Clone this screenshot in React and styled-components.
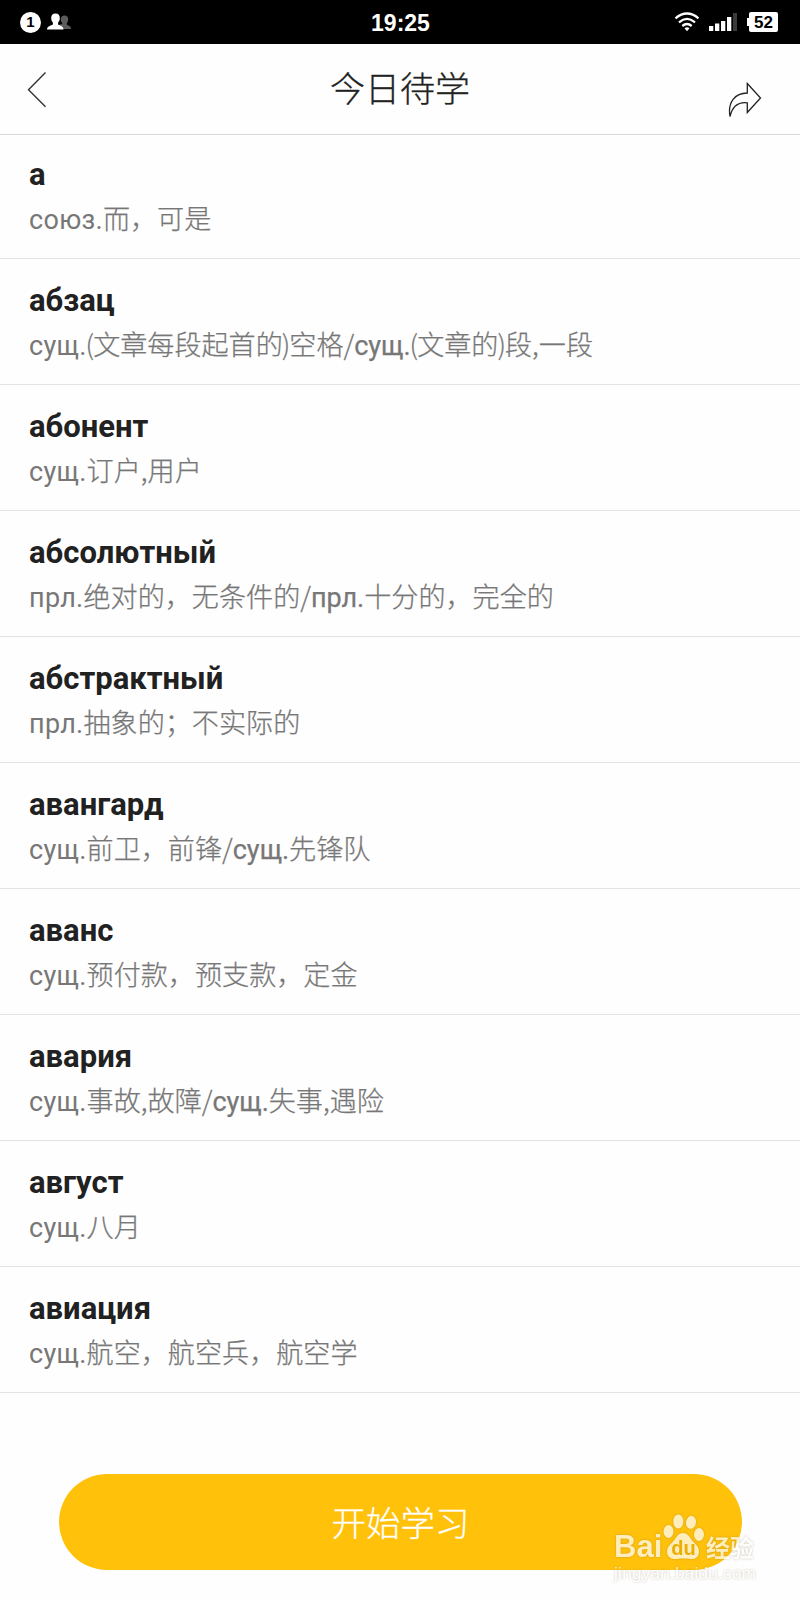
import styled, { createGlobalStyle } from "styled-components";

const words = [
    { word: "а", meanings: [["союз.", "而，可是"]] },
    { word: "абзац", meanings: [["сущ.", "(文章每段起首的)空格/"], ["сущ.", "(文章的)段,一段"]] },
    { word: "абонент", meanings: [["сущ.", "订户,用户"]] },
    { word: "абсолютный", meanings: [["прл.", "绝对的，无条件的/"], ["прл.", "十分的，完全的"]] },
    { word: "абстрактный", meanings: [["прл.", "抽象的；不实际的"]] },
    { word: "авангард", meanings: [["сущ.", "前卫，前锋/"], ["сущ.", "先锋队"]] },
    { word: "аванс", meanings: [["сущ.", "预付款，预支款，定金"]] },
    { word: "авария", meanings: [["сущ.", "事故,故障/"], ["сущ.", "失事,遇险"]] },
    { word: "август", meanings: [["сущ.", "八月"]] },
    { word: "авиация", meanings: [["сущ.", "航空，航空兵，航空学"]] },
];

function ContactsIcon() {
    return (
        <svg width="25" height="18" viewBox="0 0 25 18">
            <path fill="#5c5c5c" d="M17.5 2.5c2.600 0 3.900 1.700 3.700 4.300-.1 1.500-.7 2.600-1.400 3.300v1.700c1.800 1 4.200 1.200 4.200 4.200H12v-4l3.300-1.300V10c-1-1-1.500-2-1.500-3.500 0-2.500 1.300-4 3.700-4z" />
            <path fill="#fff" d="M8.500.5c2.900 0 4.500 1.800 4.300 4.900-.1 1.900-.7 3-1.700 4v2c2 1.300 5.400 1.700 5.400 5.100H0c0-3.400 3.800-3.800 5.900-5.100v-2c-1-1-1.600-2.100-1.700-4C4 2.300 5.600.5 8.500.5z" />
        </svg>
    );
}

function WifiIcon() {
    return (
        <svg width="26" height="20" viewBox="0 0 26 20" fill="none" stroke="#fff" strokeWidth="2.300">
            <path d="M1.500 6.300Q13-3.300 24.500 6.300" />
            <path d="M5 10.300Q13 3.500 21 10.300" />
            <path d="M8.300 14Q13 10 17.700 14" />
            <path fill="#fff" stroke="none" d="M10.500 16.200Q13 14.200 15.500 16.200L13 19.200z" />
        </svg>
    );
}

function SignalIcon() {
    return (
        <svg width="28" height="18" viewBox="0 0 28 18" fill="#fff">
            <rect x="0" y="13" width="4.300" height="5" />
            <rect x="6" y="10.500" width="4.300" height="7.500" />
            <rect x="12" y="8" width="4.300" height="10" />
            <rect x="18" y="4" width="4.300" height="14" />
            <rect x="24" y="0" width="4" height="18" fill="#3a3a3a" />
        </svg>
    );
}

function Paw() {
    return (
        <svg width="41" height="46" viewBox="0 0 41 46">
            <ellipse cx="5.500" cy="17.500" rx="5" ry="6.500" />
            <ellipse cx="15.300" cy="7.500" rx="5" ry="7" />
            <ellipse cx="28" cy="8.300" rx="5" ry="6.500" transform="rotate(10 28 8.300)" />
            <ellipse cx="36" cy="20.500" rx="5" ry="6.500" />
            <path d="M20 19c5 0 7 5 10 8.500 3 3.500 6 5 6 10 0 5-3.500 8-8.500 7.500-5-.6-9-.6-14 0C8 45.500 4 42.500 4 37.500c0-5 3.500-7 6.500-10.500S15 19 20 19z" />
        </svg>
    );
}

function App() {
    return (
        <Screen>
            <GlobalStyle />
            <StatusBar>
                <StatusLeft>
                    <Count>1</Count>
                    <ContactsIcon />
                </StatusLeft>
                <Clock>19:25</Clock>
                <StatusRight>
                    <WifiIcon />
                    <SignalIcon />
                    <Battery>52</Battery>
                </StatusRight>
            </StatusBar>
            <Header>
                <svg width="20" height="37" viewBox="0 0 20 37" fill="none" stroke="#333" strokeWidth="1.400">
                    <path d="M18.500 1.500L1.500 18.700l17 17" />
                </svg>
                <Title>今日待学</Title>
                <Share>
                    <svg width="34" height="36" viewBox="0 0 34 36" fill="none" stroke="#222" strokeWidth="1.300">
                        <path d="M19.300 1.500L32.500 16 19.300 30.500V20.800C10.500 19.800 4.500 24 2 34.500-.5 20 7 11 19.300 11z" />
                    </svg>
                </Share>
            </Header>
            <List>
                {words.map((item) => (
                    <Row key={item.word}>
                        <Word>{item.word}</Word>
                        <Meaning>
                            {item.meanings.map(([part, text], index) => (
                                <span key={index}>
                                    <Part $strong={index > 0}>{part}</Part>
                                    {text.split(/([()])/).map((piece, i) =>
                                        piece === "(" || piece === ")" ? <Paren key={i}>{piece}</Paren> : piece
                                    )}
                                </span>
                            ))}
                        </Meaning>
                    </Row>
                ))}
            </List>
            <Footer>
                <StartButton>开始学习</StartButton>
                <Watermark>
                    <Brand>
                        <Bai>Bai</Bai>
                        <PawBox>
                            <Paw />
                            <Du>du</Du>
                        </PawBox>
                        <Jingyan>经验</Jingyan>
                    </Brand>
                    <Site>jingyan.baidu.com</Site>
                </Watermark>
            </Footer>
        </Screen>
    );
}

export default App;

const GlobalStyle = createGlobalStyle`
    * {
        box-sizing: border-box;
    }

    body {
        margin: 0;
        background: #fefefe;
    }

    svg {
        display: block;
        flex-shrink: 0;
    }
`;

const Screen = styled.div`
    display: flex;
    flex-direction: column;
    width: 800px;
    height: 1600px;
    background: #fefefe;
    overflow: hidden;
    font-family: Roboto, "Noto Sans CJK SC", sans-serif;
`;

const StatusBar = styled.div`
    display: grid;
    grid-template-columns: 1fr auto 1fr;
    align-items: center;
    height: 44px;
    padding: 0 22px 0 20px;
    background: #000;
    color: #fff;
    font-family: "Liberation Sans", Arial, sans-serif;
`;

const StatusLeft = styled.div`
    display: flex;
    align-items: center;
    gap: 6px;
`;

const Count = styled.div`
    width: 21px;
    height: 21px;
    border-radius: 50%;
    background: #fff;
    color: #000;
    font-size: 15px;
    font-weight: 700;
    line-height: 20px;
    text-align: center;
`;

const Clock = styled.div`
    padding: 2px 0 0 3px;
    font-size: 23px;
    font-weight: 700;
`;

const StatusRight = styled.div`
    display: flex;
    align-items: center;
    justify-content: flex-end;
    gap: 9px;
`;

const Battery = styled.div`
    position: relative;
    width: 29px;
    height: 20px;
    margin-left: 3px;
    border-radius: 2px;
    background: #fff;
    color: #000;
    font-size: 17px;
    font-weight: 700;
    line-height: 21px;
    text-align: center;

    &::before {
        content: "";
        position: absolute;
        left: -2px;
        top: 6px;
        width: 2px;
        height: 8px;
        background: #fff;
    }
`;

const Header = styled.div`
    display: grid;
    grid-template-columns: 1fr auto 1fr;
    align-items: center;
    height: 91px;
    padding: 0 38px 0 27px;
    border-bottom: 1px solid #d9d9d9;
`;

const Title = styled.h1`
    margin: 0;
    padding: 0 0 4px 11px;
    color: #222;
    font-family: "Noto Sans CJK SC", sans-serif;
    font-size: 35px;
    font-weight: 300;
    line-height: 50px;
    -webkit-text-stroke: 0.3px #222;
`;

const Share = styled.div`
    display: flex;
    justify-content: flex-end;
    padding-top: 22px;
`;

const List = styled.div`
    display: flex;
    flex-direction: column;
    margin-top: -2px;
`;

const Row = styled.div`
    height: 126px;
    padding: 22px 29px 0;
    border-bottom: 1px solid #e3e3e3;
`;

const Word = styled.h2`
    margin: 0;
    color: #212121;
    font-size: 31px;
    font-weight: 700;
    line-height: 40px;
`;

const Meaning = styled.p`
    margin: 2px 0 0;
    color: #777;
    font-family: "Noto Sans CJK SC", sans-serif;
    font-size: 27.1px;
    font-weight: 300;
    line-height: 42px;
    white-space: nowrap;
    -webkit-text-stroke: 0.25px #777;
`;

const Part = styled.span`
    font-family: Roboto, sans-serif;
    font-size: 27px;
    font-weight: 400;
    letter-spacing: ${(props) => (props.$strong ? "0" : "0.3px")};
    -webkit-text-stroke: ${(props) => (props.$strong ? "0.25px #777" : "0")};
`;

const Paren = styled.span`
    margin: 0 -1px;
`;

const Footer = styled.div`
    position: relative;
    padding: 81px 58px 0 59px;
`;

const StartButton = styled.button`
    display: block;
    width: 100%;
    height: 96px;
    padding: 0 0 3px;
    border: none;
    border-radius: 48px;
    background: #ffc10a;
    color: #fff;
    font-family: "Noto Sans CJK SC", sans-serif;
    font-size: 34.5px;
    font-weight: 300;
    -webkit-text-stroke: 0.3px #fff;
`;

const Watermark = styled.div`
    position: absolute;
    left: 614px;
    top: 121px;
    color: #fff;
    opacity: 0.72;
    filter: drop-shadow(0 0 1px rgba(120, 100, 60, 0.5));
`;

const Brand = styled.div`
    display: flex;
    align-items: flex-end;
    height: 46px;
`;

const Bai = styled.div`
    width: 49px;
    font-family: "Liberation Sans", sans-serif;
    font-size: 31px;
    font-weight: 700;
    line-height: 26px;
`;

const PawBox = styled.div`
    position: relative;
    fill: #fff;
`;

const Du = styled.div`
    position: absolute;
    left: 0;
    bottom: 3px;
    width: 41px;
    color: #e5a800;
    font-family: "Liberation Sans", sans-serif;
    font-size: 20px;
    font-weight: 700;
    line-height: 18px;
    text-align: center;
`;

const Jingyan = styled.div`
    margin-left: 2px;
    font-family: "Noto Sans CJK SC", sans-serif;
    font-size: 24px;
    font-weight: 700;
    line-height: 27px;
`;

const Site = styled.div`
    margin-top: 4px;
    font-family: "Liberation Sans", sans-serif;
    font-size: 17px;
    letter-spacing: 0.3px;
    line-height: 19px;
`;
